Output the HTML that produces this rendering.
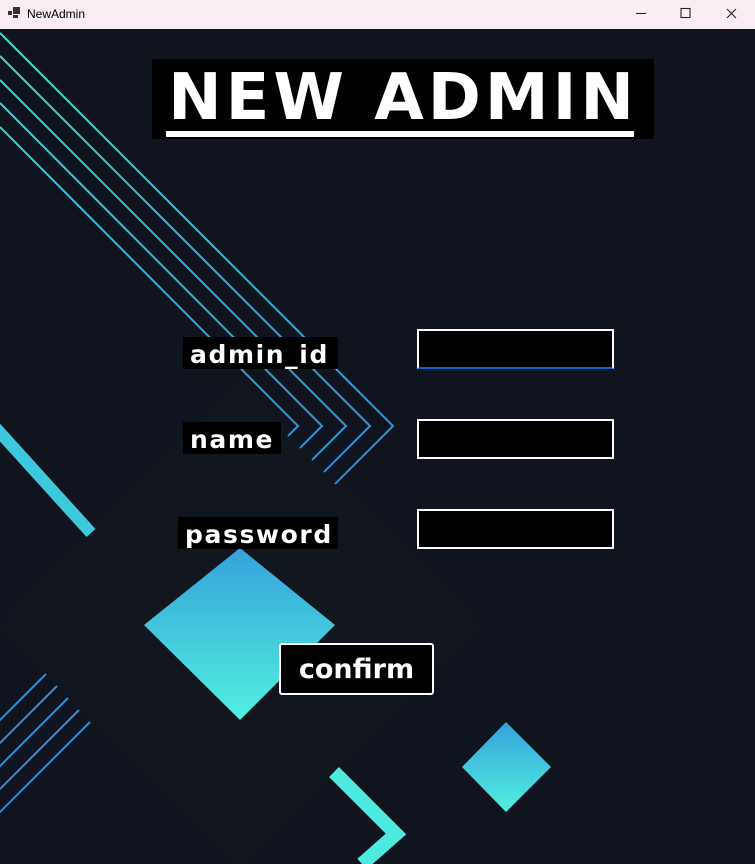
<!DOCTYPE html>
<html><head><meta charset="utf-8"><style>
*{margin:0;padding:0;box-sizing:border-box}
html,body{width:755px;height:864px;overflow:hidden;background:#10141e;font-family:"DejaVu Sans","Liberation Sans",sans-serif;position:relative}
.tb{position:absolute;left:0;top:0;width:755px;height:29px;background:#f8eef4;font-family:"Liberation Sans",sans-serif;font-size:12px;color:#000}
.abs{position:absolute}
.lbl{position:absolute;background:#000;color:#fff;font-weight:bold;font-size:25px;line-height:36px;height:32px;padding-left:7px;letter-spacing:1.6px;overflow:hidden}
.inp{position:absolute;left:417px;width:197px;height:40px;background:#000;border:2px solid #fff}
</style></head><body>
<div class="tb">
<svg class="abs" style="left:8px;top:7px" width="12" height="12"><rect x="0" y="4" width="4" height="4" fill="#333"/><rect x="5" y="0" width="7" height="7" fill="#333"/><rect x="5" y="8" width="5" height="3" fill="#333"/></svg>
<span class="abs" style="left:27px;top:7px">NewAdmin</span>
<svg class="abs" style="left:630px;top:6px" width="120" height="16" stroke="#222" stroke-width="1.1" fill="none"><line x1="6" y1="7.5" x2="16" y2="7.5"/><rect x="51" y="2.5" width="9" height="9"/><line x1="97" y1="3" x2="106" y2="12"/><line x1="106" y1="3" x2="97" y2="12"/></svg>
</div>
<svg class="abs" style="left:0;top:0" width="755" height="864">
<defs>
<linearGradient id="lg" x1="0" y1="30" x2="0" y2="480" gradientUnits="userSpaceOnUse"><stop offset="0" stop-color="#40e0cf"/><stop offset="1" stop-color="#2d8bd4"/></linearGradient>
<linearGradient id="dg" x1="0" y1="0" x2="0" y2="1"><stop offset="0" stop-color="#35a2db"/><stop offset="1" stop-color="#52f0df"/></linearGradient>
</defs>
<polygon points="240,380 480,625 240,864 0,625" fill="#11161f"/>
<g stroke="url(#lg)" stroke-width="2" fill="none">
<polyline points="0,33 393,426 335,484"/>
<polyline points="0,56 370,426 324,472"/>
<polyline points="0,80 346,426 312,460"/>
<polyline points="0,103 322,426 300,448"/>
<polyline points="0,127 298,426 288,436"/>
</g>
<line x1="-5" y1="427" x2="91" y2="533" stroke="#3ec8dc" stroke-width="12"/>
<g stroke="#2e90d6" stroke-width="2">
<line x1="46" y1="674" x2="-150" y2="870"/>
<line x1="57" y1="686" x2="-150" y2="893"/>
<line x1="68" y1="698" x2="-150" y2="916"/>
<line x1="79" y1="710" x2="-150" y2="939"/>
<line x1="90" y1="722" x2="-150" y2="962"/>
</g>
<polygon points="240,548 335,625 240,720 144,625" fill="url(#dg)"/>
<polygon points="506,722 551,767 506,812 462,767" fill="url(#dg)"/>
<polyline points="334,772 396,834 362,864" stroke="#4eeadf" stroke-width="14" fill="none"/>
</svg>
<div class="abs" style="left:152px;top:59px;width:502px;height:80px;background:#000"></div>
<div class="abs" style="left:152px;top:58px;width:502px;height:80px;overflow:hidden;text-align:center;color:#fff;font-weight:bold;font-size:64px;line-height:80px;letter-spacing:4px">NEW ADMIN</div>
<div class="abs" style="left:166px;top:131px;width:468px;height:6px;background:#fff"></div>
<div class="lbl" style="left:183px;top:337px;width:155px">admin_id</div>
<div class="lbl" style="left:183px;top:422px;width:98px">name</div>
<div class="lbl" style="left:178px;top:517px;width:160px">password</div>
<div class="inp" style="top:329px;border-bottom:2px solid #0a64c8"></div>
<div class="inp" style="top:419px"></div>
<div class="inp" style="top:509px"></div>
<div class="abs" style="left:279px;top:643px;width:155px;height:52px;background:#000;border:2px solid #fff;border-radius:3px;color:#fff;font-weight:bold;font-size:27px;line-height:50px;text-align:center">confirm</div>
</body></html>
